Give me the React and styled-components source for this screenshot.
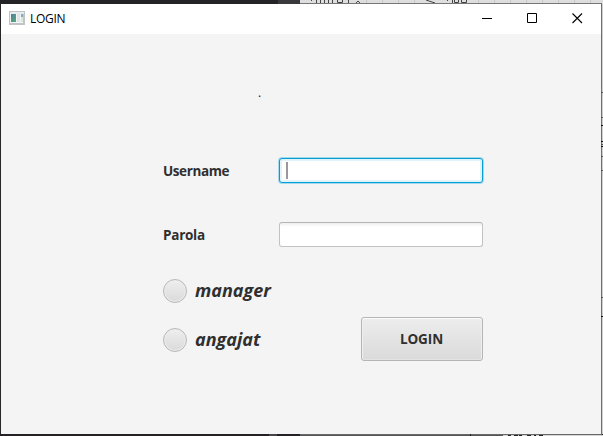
import React from 'react';
import styled, { createGlobalStyle, css } from 'styled-components';

const GlobalStyle = createGlobalStyle`
  * { box-sizing: border-box; }
  body { margin: 0; overflow: hidden; background: #211f22; }
`;

const Desktop = styled.main`
  display: grid;
  grid-template-columns: 1px 600px 2px;
  grid-template-rows: 4px 430px 2px;
  width: 603px;
  height: 436px;
  overflow: hidden;
  font-family: 'Open Sans', 'Noto Sans', sans-serif;
`;

const BackdropStrip = styled.svg`
  display: block;
  grid-column: ${({ $side }) => ($side ? '3' : '1 / -1')};
  width: 100%;
  height: 100%;
`;

const LeftEdge = styled.div`
  background: #272528;
`;

const Window = styled.section`
  display: flex;
  flex-direction: column;
  background: #f4f4f4;
`;

const TitleBar = styled.header`
  display: flex;
  align-items: center;
  height: 30px;
  padding-left: 8px;
  background: #fff;
`;

const AppIcon = styled.svg`
  flex: none;
  margin: 0 5px 2px 0;
`;

const WindowTitle = styled.h1`
  flex: 1;
  margin: 0;
  color: #000;
  font-size: 12px;
  font-weight: 400;
  line-height: 30px;
  letter-spacing: -0.3px;
`;

const WindowButton = styled.button`
  display: grid;
  place-items: center;
  width: ${({ $width }) => $width}px;
  height: 28px;
  margin-bottom: 2px;
  padding: 0;
  border: 0;
  background: transparent;
`;

const Content = styled.form`
  padding: 53px 119px 0 162px;
`;

const Heading = styled.p`
  height: 16px;
  margin: 0 0 55px 95px;
  color: #111;
  font-size: 12px;
  line-height: 12px;
`;

const Field = styled.label`
  display: grid;
  grid-template-columns: 116px 204px;
  align-items: center;
  height: 25px;
  margin-bottom: ${({ $gap }) => $gap}px;
`;

const FieldName = styled.span`
  color: #2f2f2f;
  font-size: 13.5px;
  font-weight: 700;
  line-height: 18px;
  letter-spacing: ${({ $spacing }) => $spacing}px;
`;

const TextBox = styled.div`
  display: flex;
  align-items: center;
  height: 25px;
  padding-left: 6px;
  border: 1px solid #c2c2c2;
  border-top-color: #b5b5b5;
  border-radius: 3px;
  background: linear-gradient(#efefef, #fff 4px);
  ${({ $focused }) => $focused && css`
    border-color: #039ed3;
    background: #fff;
    box-shadow: 0 0 0 1px #a5daec, inset 0 0 0 2px #e2f3f9;
  `}
`;

const Caret = styled.span`
  width: 2px;
  height: 17px;
  background: #999;
`;

const Actions = styled.div`
  display: grid;
  grid-template-columns: 198px 122px;
`;

const Roles = styled.div`
  display: flex;
  flex-direction: column;
  gap: 25px;
`;

const Role = styled.label`
  display: flex;
  align-items: center;
  gap: 8px;
  height: 24px;
`;

const RadioDot = styled.span`
  width: 24px;
  height: 24px;
  border: 1px solid #b8b8b8;
  border-radius: 50%;
  background: linear-gradient(#eeeeee, #dadada);
  box-shadow: inset 0 0 0 1px #ececec;
`;

const RoleName = styled.span`
  margin-bottom: 2px;
  color: #2f2f2f;
  font-size: 18px;
  font-style: italic;
  font-weight: 700;
  line-height: 24px;
`;

const LoginButton = styled.button`
  height: 44px;
  margin-top: 38px;
  padding: 0 1px 0 0;
  border: 1px solid #b5b5b5;
  border-radius: 3px;
  background: linear-gradient(#ededed, #dadada);
  box-shadow: inset 0 1px 0 #fbfbfb, inset 1px 0 0 #eeeeee, inset -1px 0 0 #eeeeee, inset 0 -1px 0 #e3e3e3;
  color: #2f2f2f;
  font: 700 13.5px/18px 'Open Sans', sans-serif;
  letter-spacing: -0.1px;
`;

function TopBackdrop() {
  return (
    <BackdropStrip viewBox="0 0 603 4">
      <path fill="#242326" d="M0 0h278v4H0z" />
      <path fill="#39393b" d="M278 0h22v4h-22z" />
      <path fill="#dedede" d="M300 0h303v4H300z" />
      <path stroke="#c7c7c7" d="M366.500 0v3M382.500 0v3M398.500 0v3M414.500 0v3M478.500 0v3M494.500 0v3M510.500 0v3M526.500 0v3M542.500 0v3M558.500 0v3M574.500 0v3M590.500 0v3" />
      <path stroke="#444" fill="none" d="M311.500 0v1M316.500 0v3M320.500 0v3M324.500 0v3M328.500 0v3M332.500 0v3M337.500 0v2.500h5v-2.500M348.500 0v3M356 3l2-2 2 2M426 0l9 3M447.500 0v1M452.500 0v3M454.500 0v2.500h4v-2.500M461.500 0v2.500h5v-2.500" />
      <path stroke="#767676" d="M300 3.500h302" />
    </BackdropStrip>
  );
}

function SideBackdrop() {
  return (
    <BackdropStrip $side viewBox="0 0 2 430">
      <path fill="#707070" d="M0 0h1v430H0z" />
      <path fill="#cfcfcf" d="M1 0h1v430H1z" />
      <path stroke="#111" d="M0 121.500h2M0 137.500h2M0 142.500h2M0 312.500h2" />
      <path stroke="#555" d="M0 88.500h2M0 113.500h2M0 140.500h2M0 152.500h2M0 166.500h2M0 293.500h2" />
    </BackdropStrip>
  );
}

function BottomBackdrop() {
  return (
    <BackdropStrip viewBox="0 0 603 2">
      <path fill="#242023" d="M0 0h300v2H0z" />
      <path fill="#454344" d="M269 0h8v2h-8z" />
      <path fill="#686868" d="M300 0h302v1H300z" />
      <path fill="#555" d="M300 1h203v1H300z" />
      <path fill="#d5d5d5" d="M503 1h100v1H503z" />
      <path stroke="#222" d="M470.500 0v2M508 1.500h3M514 1.500h4M519 1.500h3M527 1.500h4M534 1.500h2M539 1.500h4" />
    </BackdropStrip>
  );
}

export default function App() {
  return (
    <>
      <GlobalStyle />
      <Desktop>
        <TopBackdrop />
        <LeftEdge />
        <Window>
          <TitleBar>
            <AppIcon width="16" height="14" viewBox="0 0 16 14" shapeRendering="crispEdges">
              <defs>
                <linearGradient id="pane" x2="1" y2="1">
                  <stop stopColor="#5279a6" />
                  <stop offset="1" stopColor="#54ae78" />
                </linearGradient>
              </defs>
              <path fill="#c0c4c8" d="M0 0h16v14H0z" />
              <path fill="#e8ebed" d="M1 1h14v2H1z" />
              <path fill="#f1f3f4" d="M1 3h13v9H1z" />
              <path fill="url(#pane)" d="M2 3h5v8H2z" />
              <path fill="#e0e6e5" d="M8 3h3v8H8z" />
              <path fill="#83aab5" d="M12 3h2v3h-2z" />
              <path fill="#d5e8da" d="M12 6h2v5h-2z" />
            </AppIcon>
            <WindowTitle>LOGIN</WindowTitle>
            <WindowButton type="button" aria-label="Minimize" $width={45}>
              <svg width="11" height="11" viewBox="0 0 11 11"><path d="M0 5.500h10" stroke="#000" /></svg>
            </WindowButton>
            <WindowButton type="button" aria-label="Maximize" $width={44}>
              <svg width="11" height="11" viewBox="0 0 11 11"><path d="M.5.5h9v9h-9z" fill="none" stroke="#000" /></svg>
            </WindowButton>
            <WindowButton type="button" aria-label="Close" $width={47}>
              <svg width="11" height="11" viewBox="0 0 11 11"><path d="M.5.5l9.500 9.500M10 .5L.5 10" stroke="#000" strokeWidth="1.100" /></svg>
            </WindowButton>
          </TitleBar>
          <Content>
            <Heading>.</Heading>
            <Field $gap={39}>
              <FieldName $spacing={-0.4}>Username</FieldName>
              <TextBox $focused><Caret /></TextBox>
            </Field>
            <Field $gap={32}>
              <FieldName $spacing={-0.25}>Parola</FieldName>
              <TextBox />
            </Field>
            <Actions>
              <Roles>
                <Role><RadioDot /><RoleName>manager</RoleName></Role>
                <Role><RadioDot /><RoleName>angajat</RoleName></Role>
              </Roles>
              <LoginButton type="button">LOGIN</LoginButton>
            </Actions>
          </Content>
        </Window>
        <SideBackdrop />
        <BottomBackdrop />
      </Desktop>
    </>
  );
}
